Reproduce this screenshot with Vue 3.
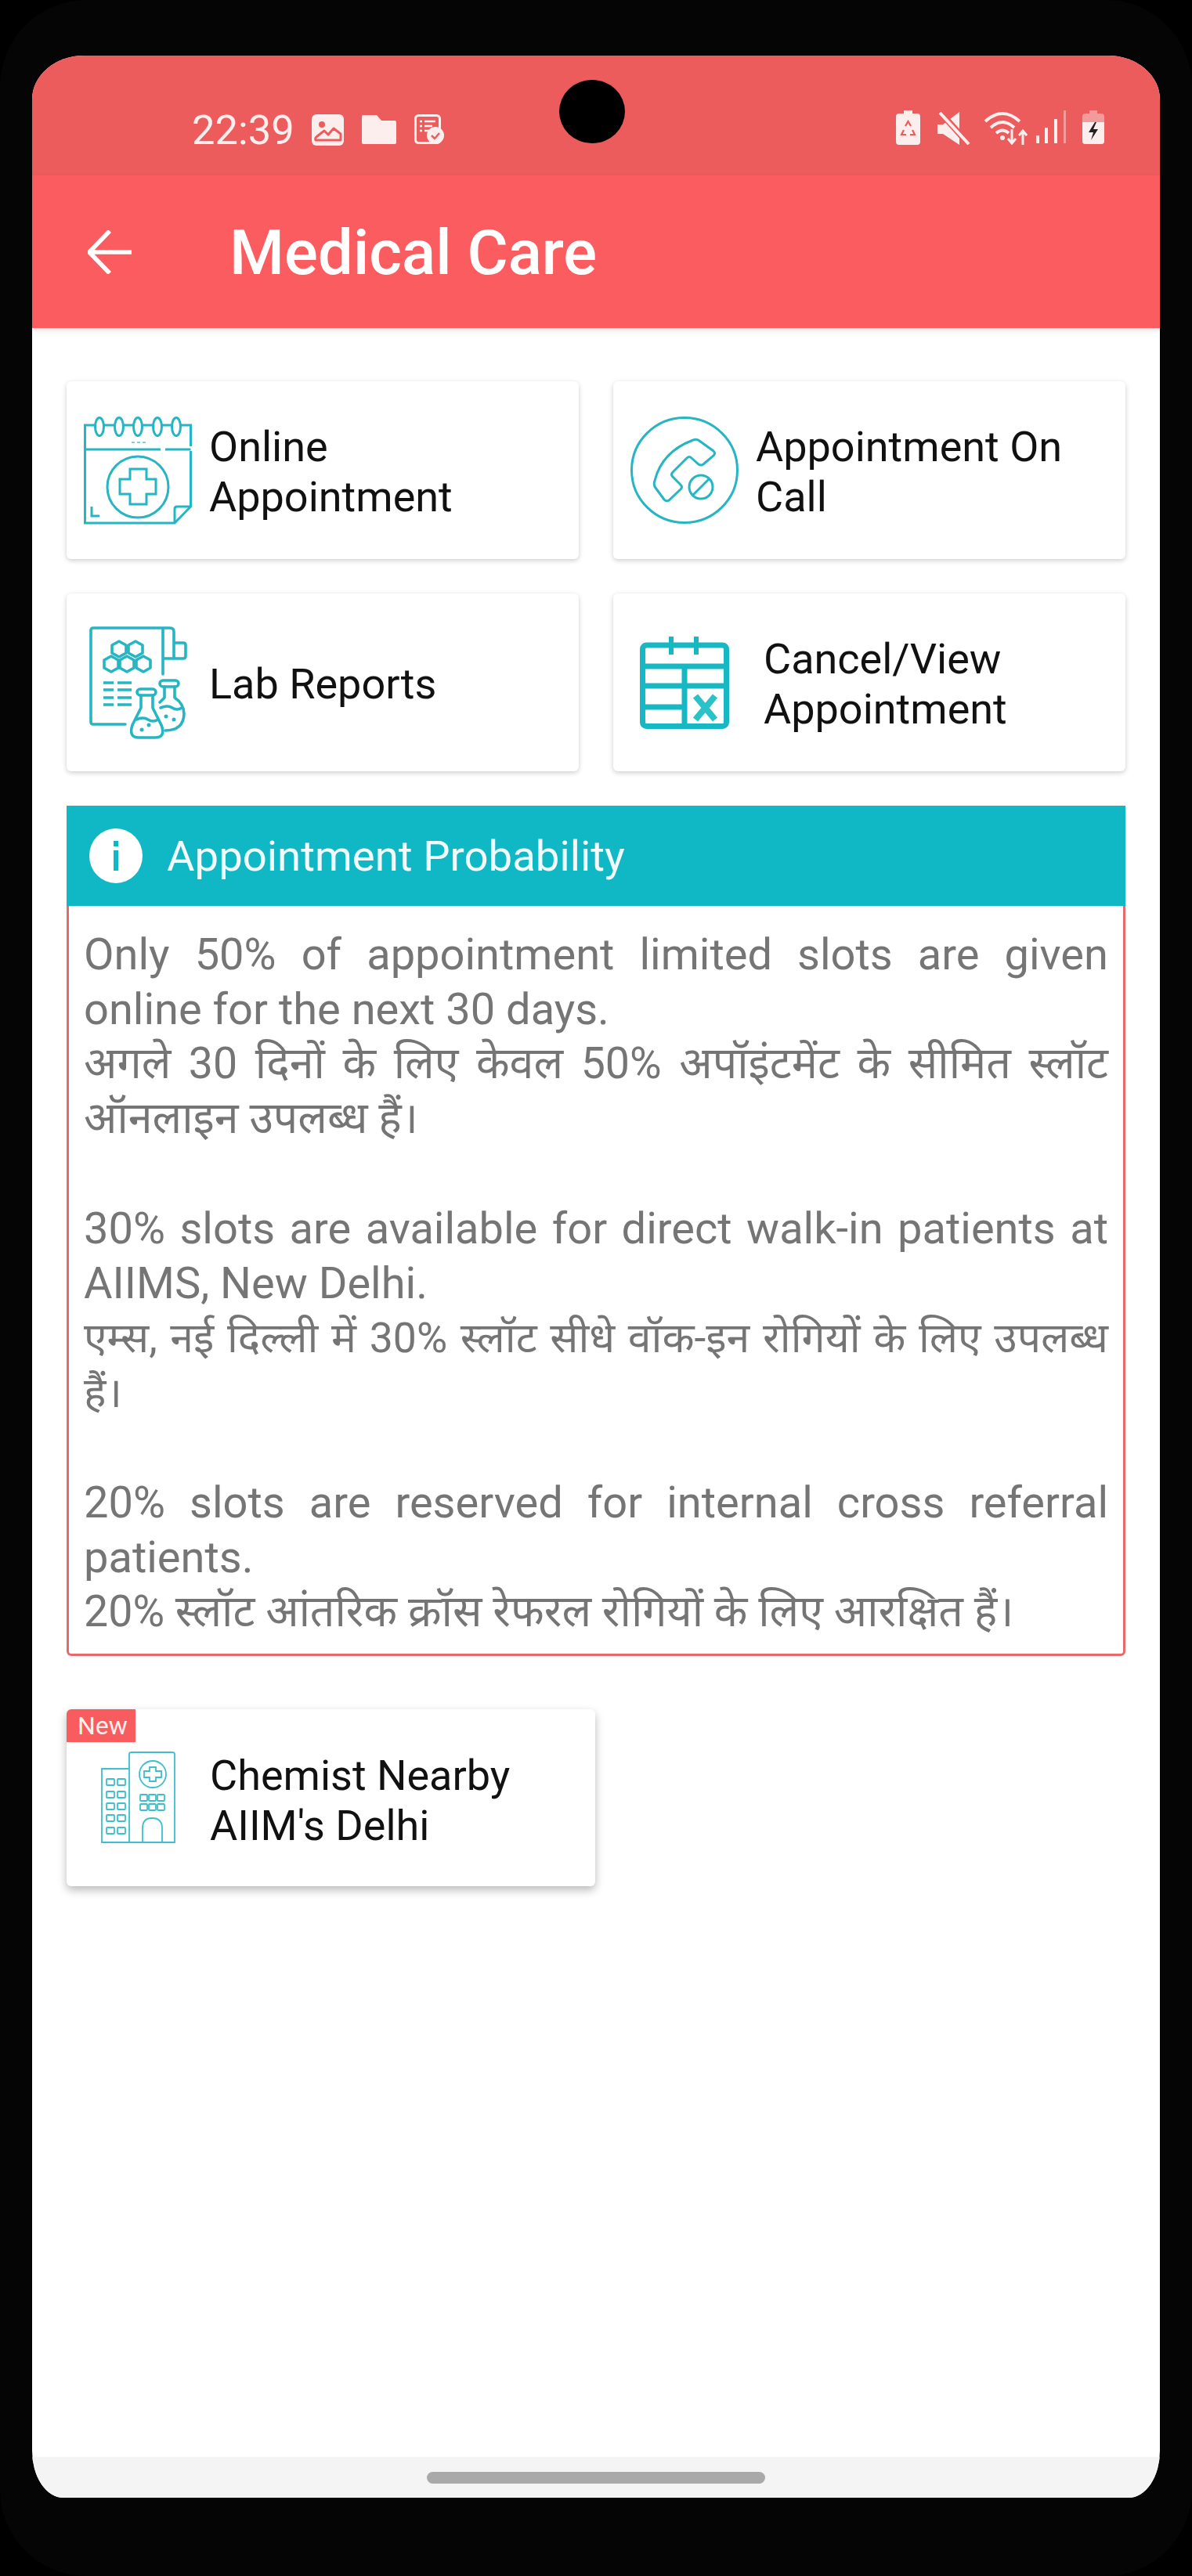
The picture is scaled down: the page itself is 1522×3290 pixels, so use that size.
<script setup>
const paragraphs = [
  ['Only 50% of appointment limited slots are given online for the next 30 days.', 'अगले 30 दिनों के लिए केवल 50% अपॉइंटमेंट के सीमित स्लॉट ऑनलाइन उपलब्ध हैं।'],
  ['30% slots are available for direct walk-in patients at AIIMS, New Delhi.', 'एम्स, नई दिल्ली में 30% स्लॉट सीधे वॉक-इन रोगियों के लिए उपलब्ध हैं।'],
  ['20% slots are reserved for internal cross referral patients.', '20% स्लॉट आंतरिक क्रॉस रेफरल रोगियों के लिए आरक्षित हैं।']
]
const leftWindows = [39, 55, 70, 85, 101]
const hexes = [[38, 30], [59, 30], [28, 49], [48, 49], [69, 49]]
</script>

<template>
  <div class="phone">
    <div class="screen">
      <header class="status">
        <div class="status-left">
          <span class="time">22:39</span>
          <svg class="st-img" viewBox="0 0 41 40">
            <rect x="0" y="0" width="41" height="40" rx="6" fill="#fdeeee" />
            <circle cx="13" cy="13" r="4" fill="#ec5c5c" />
            <path d="M5 33 Q4 30 7 28 L16 21 L21 26 L28 18 L37 25 V33 Z" fill="#fdeeee" stroke="#ec5c5c" stroke-width="3" stroke-linejoin="round" />
          </svg>
          <svg class="st-folder" viewBox="0 0 44 37">
            <path d="M2 0 H19 L25 7 H42 Q44 7 44 9 V35 Q44 37 42 37 H2 Q0 37 0 35 V2 Q0 0 2 0Z" fill="#fdeeee" />
          </svg>
          <svg class="st-doc" viewBox="0 0 38 38">
            <rect x="1.5" y="1.5" width="31" height="35" rx="4" fill="none" stroke="#fdeeee" stroke-width="3" />
            <path d="M7 9h3M13 9h14M7 15h3M13 15h10M7 21h3M13 21h6" stroke="#fdeeee" stroke-width="2.5" />
            <circle cx="27" cy="27" r="11" fill="#fdeeee" />
            <path d="M22 27l4 4 6-7" fill="none" stroke="#ec5c5c" stroke-width="2.5" />
          </svg>
        </div>
        <div class="status-right">
          <svg class="st-batt1" viewBox="0 0 31 44">
            <path d="M10 0h11v4h6q4 0 4 4v32q0 4-4 4H4q-4 0-4-4V8q0-4 4-4h6z" fill="#fdeeee" />
            <path d="M12 20l3.500-6 3.500 6M21 25l3 6h-6M13 31H7l3-6" fill="none" stroke="#ec5c5c" stroke-width="2.200" />
          </svg>
          <svg class="st-mute" viewBox="0 0 42 42">
            <path d="M0 16h7L28 0v42L7 28H0z" fill="#fdeeee" />
            <path d="M5 2 L40 41" stroke="#ec5c5c" stroke-width="8" />
            <path d="M3 1 L40 41" stroke="#fdeeee" stroke-width="4" />
          </svg>
          <svg class="st-wifi" viewBox="0 0 56 44">
            <g fill="none" stroke="#fdeeee" stroke-width="4">
              <path d="M2 14 Q24 -6 46 14" />
              <path d="M9 22 Q24 8 39 22" />
              <path d="M16 29 Q24 22 32 29" />
            </g>
            <circle cx="24" cy="35" r="3" fill="#fdeeee" />
            <path d="M36 24v17M31 36l5 6 5-6M50 44V27M45 32l5-6 5 6" fill="none" stroke="#fdeeee" stroke-width="3" />
          </svg>
          <svg class="st-signal" viewBox="0 0 39 42">
            <rect x="0" y="32" width="4" height="10" fill="#fdeeee" />
            <rect x="11" y="22" width="4" height="20" fill="#fdeeee" />
            <rect x="23" y="11" width="4" height="31" fill="#fdeeee" />
            <rect x="35" y="0" width="3" height="42" fill="#f39c9c" />
          </svg>
          <svg class="st-batt2" viewBox="0 0 28 43">
            <path d="M9 0h10v4h5q4 0 4 4v31q0 4-4 4H4q-4 0-4-4V8q0-4 4-4h5z" fill="#f39a9a" />
            <path d="M0 15h28v24q0 4-4 4H4q-4 0-4-4z" fill="#fdeeee" />
            <path d="M16 15l-8 13h6l-3 10 9-14h-6l4-9z" fill="#222" />
          </svg>
        </div>
        <span class="camera"></span>
      </header>

      <div class="appbar">
        <svg class="back" viewBox="0 0 56 56">
          <path d="M56 28H3M28 1L2 28l26 27" fill="none" stroke="#fff" stroke-width="5.500" />
        </svg>
        <h1 class="title">Medical Care</h1>
      </div>

      <main class="content">
        <section class="grid">
          <div class="card">
            <span class="icon-box">
              <svg class="ic-online" viewBox="0 0 138 138">
                <g fill="none" stroke="#26b5c2" stroke-width="3">
                  <path d="M14 11H1.500V136H116L136.500 115V44M136.500 38V11H124" />
                  <path d="M25 11H39M50 11H63M74 11H88M99 11H112" />
                  <ellipse v-for="x in [20, 45, 69, 94, 118]" :key="x" :cx="x" cy="13" rx="5.500" ry="11.500" />
                  <path d="M1.500 42H98M104 42H136.500" stroke-width="3.200" />
                  <path d="M116 136V118Q116 115 119 115H136.500" />
                  <circle cx="69" cy="90" r="39" />
                  <path d="M59 67H80V80H92V99H80V112H59V99H46V80H59Z" />
                  <path d="M10 115V127H20" />
                </g>
                <path d="M61 33h4M68 33h4M75 33h4" stroke="#26b5c2" stroke-width="2" opacity=".6" />
              </svg>
            </span>
            <span class="label">Online<br />Appointment</span>
          </div>

          <div class="card">
            <span class="icon-box">
              <svg class="ic-online" viewBox="0 0 138 138">
                <g fill="none" stroke="#26b5c2" stroke-width="3">
                  <ellipse cx="69" cy="68.500" rx="67.500" ry="67" />
                  <path d="M80 30Q84 28 88 31L106 44Q109 47 106 50L93 61Q90 63 87 61L78 53Q75 50 72 53L54 71Q51 74 54 77L64 87Q67 90 64 93L49 107Q46 109 43 106L32 91Q29 87 31 82Q40 45 80 30Z" />
                  <circle cx="90" cy="90" r="15" />
                  <path d="M80 100L100 80" />
                </g>
              </svg>
            </span>
            <span class="label">Appointment On<br />Call</span>
          </div>

          <div class="card">
            <span class="icon-box">
              <svg class="ic-lab" viewBox="0 0 125 145">
                <g fill="none" stroke="#26b5c2" stroke-width="3.600" stroke-linejoin="round" stroke-linecap="round">
                  <path d="M46 126H5Q2 126 2 123V6Q2 3 5 3H103Q108 3 108 8V42H94V62M94 3V42M108 22H120Q123 22 123 25V39Q123 42 120 42H108" />
                  <path v-for="h in hexes" :key="h[0] + '-' + h[1]"
                    :d="`M${h[0] - 9} ${h[1] - 5}L${h[0]} ${h[1] - 10}L${h[0] + 9} ${h[1] - 5}V${h[1] + 5}L${h[0]} ${h[1] + 10}L${h[0] - 9} ${h[1] + 5}Z`" />
                  <path d="M18 73H31M36 73H54M18 82H31M36 82H54M18 92H31M36 92H54M18 101H31M36 101H54" stroke-linecap="butt" />
                  <rect x="61" y="81" width="24" height="8" rx="4" />
                  <path d="M66 89V105L55 127Q50 143 63 143H84Q98 143 92 127L81 105V89M60 120Q69 116 75 120T88 120" />
                  <rect x="90" y="70" width="24" height="8" rx="4" />
                  <path d="M96 78V92L90 98M109 78V92Q121 100 121 113Q120 134 97 134M91 105Q100 101 106 105T118 105" />
                </g>
                <g fill="#26b5c2"><circle cx="67" cy="133" r="2.500" /><circle cx="76" cy="127" r="2.500" /><circle cx="98" cy="116" r="2.500" /><circle cx="108" cy="120" r="2.500" /></g>
              </svg>
            </span>
            <span class="label">Lab Reports</span>
          </div>

          <div class="card">
            <span class="icon-box">
              <svg class="ic-cancel" viewBox="0 0 114 118">
                <g fill="none" stroke="#18b7c4" stroke-width="7">
                  <rect x="3.500" y="11" width="107" height="103.500" rx="5" />
                  <path d="M0 38H114M57 38V118M0 63H114M0 90H57" />
                  <path d="M40 0V23M72 0V23" stroke-width="6" />
                </g>
                <path d="M71 76L96 106M96 76L71 106" stroke="#2ac2c8" stroke-width="8" fill="none" />
              </svg>
            </span>
            <span class="label label-wide">Cancel/View<br />Appointment</span>
          </div>
        </section>

        <section class="alert">
          <div class="alert-head">
            <svg class="info" viewBox="0 0 68 70">
              <ellipse cx="34" cy="35" rx="34" ry="35" fill="#fff" />
              <rect x="31" y="16" width="6" height="7" fill="#10b7c4" />
              <rect x="31" y="28" width="6" height="26" fill="#10b7c4" />
            </svg>
            <span class="alert-title">Appointment Probability</span>
          </div>
          <div class="alert-body">
            <div v-for="(p, i) in paragraphs" :key="i" class="para">
              <p class="line">{{ p[0] }}</p>
              <p class="line hindi" :class="{ tight: i === 1 }">{{ p[1] }}</p>
            </div>
          </div>
        </section>

        <section class="chemist">
          <span class="badge">New</span>
          <svg class="ic-hospital" viewBox="0 0 95 117">
            <g fill="none" stroke="#3fbfca" stroke-width="1.800">
              <path d="M36 22H1V116H94V3Q94 1 91 1H39Q36 1 36 3V116" />
              <circle cx="66" cy="29" r="17" />
              <path d="M62 20H70V25H77V33H70V38H62V33H55V25H62Z" />
              <g v-for="y in leftWindows" :key="y">
                <rect x="7" :y="y - 4" width="10" height="8" rx="1" />
                <rect x="21" :y="y - 4" width="10" height="8" rx="1" />
              </g>
              <g v-for="x in [55, 66, 77]" :key="x">
                <rect :x="x - 5" y="55" width="9" height="8" rx="1" />
                <rect :x="x - 5" y="67" width="9" height="8" rx="1" />
              </g>
              <path d="M53 116V98Q53 85 65 85Q78 85 78 98V116" />
            </g>
          </svg>
          <span class="label label-chem">Chemist Nearby<br />AIIM's Delhi</span>
        </section>
      </main>

      <footer class="navbar"><span class="pill"></span></footer>
    </div>
  </div>
</template>

<style>
html, body { margin: 0; background: #000; }
</style>

<style scoped>
.phone {
  width: 1522px;
  height: 3290px;
  box-sizing: border-box;
  padding: 71px 41px 100px;
  background: #050505;
  border-radius: 110px;
  font-family: Roboto, "Noto Sans", sans-serif;
}
.screen {
  height: 3119px;
  display: flex;
  flex-direction: column;
  background: #fff;
  border-radius: 66px 66px 40px 40px / 56px 56px 60px 60px;
  overflow: hidden;
}
.status {
  position: relative;
  flex: none;
  height: 153px;
  box-sizing: border-box;
  padding: 70px 71px 0 204px;
  display: flex;
  justify-content: space-between;
  background: #ec5c5c;
}
.status-left { display: flex; align-items: flex-start; }
.time {
  width: 153px;
  font-size: 52.500px;
  line-height: 50px;
  color: #fdeeee;
  margin-top: 0;
}
.st-img { width: 41px; height: 40px; margin: 5px 23px 0 0; }
.st-folder { width: 44px; height: 37px; margin: 6px 23px 0 0; }
.st-doc { width: 38px; height: 38px; margin-top: 5px; }
.status-right { display: flex; align-items: flex-start; }
.st-batt1 { width: 31px; height: 44px; margin-right: 22px; }
.st-mute { width: 42px; height: 42px; margin: 2px 17px 0 0; }
.st-wifi { width: 56px; height: 44px; margin-right: 11px; }
.st-signal { width: 39px; height: 42px; margin-right: 20px; }
.st-batt2 { width: 28px; height: 43px; }
.camera {
  position: absolute;
  left: 673px;
  top: 31px;
  width: 84px;
  height: 81px;
  border-radius: 50%;
  background: #000;
}
.appbar {
  flex: none;
  height: 195px;
  display: flex;
  align-items: center;
  background: #fa5c5f;
  box-shadow: 0 3px 6px rgba(0, 0, 0, .12);
  position: relative;
}
.back { width: 56px; height: 56px; margin-left: 71px; }
.title {
  margin: 2px 0 0 125px;
  font-size: 80px;
  font-weight: 500;
  line-height: 100px;
  color: #fff;
}
.content {
  flex: 1;
  box-sizing: border-box;
  padding: 68px 44px 0;
}
.grid {
  display: grid;
  grid-template-columns: 654px 654px;
  grid-auto-rows: 227px;
  gap: 44px;
}
.card {
  display: flex;
  align-items: center;
  padding-left: 22px;
  background: #fff;
  border-radius: 6px;
  box-shadow: 0 2px 6px rgba(0, 0, 0, .2);
}
.icon-box {
  flex: none;
  width: 138px;
  display: flex;
  justify-content: center;
  margin-right: 22px;
}
.ic-online { width: 138px; height: 138px; display: block; }
.ic-lab { width: 125px; height: 145px; display: block; }
.ic-cancel { width: 114px; height: 118px; display: block; }
.label {
  padding-top: 5px;
  font-size: 54px;
  line-height: 64px;
  color: #111;
}
.label-wide { margin-left: 10px; }
.alert { margin-top: 44px; }
.alert-head {
  height: 128px;
  display: flex;
  align-items: center;
  padding-left: 29px;
  background: #10b7c4;
}
.info { width: 68px; height: 70px; margin-right: 31px; }
.alert-title { font-size: 54.500px; color: #f2fbfc; }
.alert-body {
  box-sizing: border-box;
  height: 958px;
  padding: 27px 19px 0;
  border: 3px solid #e8686b;
  border-top: 0;
  border-radius: 0 0 6px 6px;
}
.para { margin-bottom: 70px; }
.line {
  margin: 0;
  font-size: 56px;
  line-height: 70px;
  color: #757575;
  text-align: justify;
}
.hindi { font-size: 55.500px; }
.tight { font-size: 53.500px; }
.chemist {
  position: relative;
  box-sizing: border-box;
  width: 675px;
  height: 226px;
  margin-top: 68px;
  padding: 54px 0 0 44px;
  display: flex;
  background: #fff;
  border-radius: 6px;
  box-shadow: 0 5px 12px rgba(0, 0, 0, .28);
}
.badge {
  position: absolute;
  left: 0;
  top: 0;
  width: 88px;
  height: 42px;
  box-sizing: border-box;
  padding-left: 14px;
  font-size: 32px;
  line-height: 42px;
  color: #fdeeee;
  background: #f95c5f;
  border-radius: 6px 0 0 0;
}
.ic-hospital { width: 95px; height: 117px; flex: none; margin-right: 44px; }
.label-chem { margin-top: -6px; }
.navbar {
  flex: none;
  height: 52px;
  display: flex;
  justify-content: center;
  padding-top: 19px;
  box-sizing: border-box;
  background: #f4f4f4;
}
.pill {
  width: 432px;
  height: 15px;
  border-radius: 8px;
  background: #a9a9a9;
}
</style>
